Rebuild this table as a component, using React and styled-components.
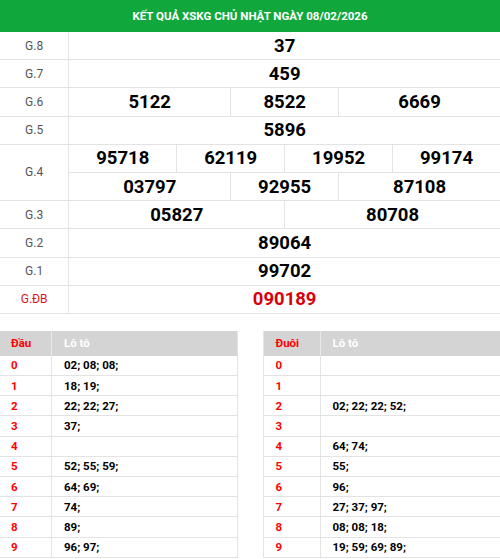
import React from "react";
import styled, { createGlobalStyle } from "styled-components";

const Global = createGlobalStyle`
  html, body { margin: 0; padding: 0; background: #fff; }
  body { font-family: Roboto, "Liberation Sans", Arial, sans-serif; width: 500px; overflow: hidden; }
`;

const Page = styled.div`
  width: 500px;
`;

const Title = styled.div`
  height: 32px;
  background: #10a83c;
  color: #fff;
  font-weight: 700;
  font-size: 11.5px;
  display: flex;
  align-items: center;
  justify-content: center;
  letter-spacing: 0;
`;

const Board = styled.div`
  display: grid;
  grid-template-columns: 68.3px repeat(8, 1fr);
  grid-auto-rows: 28.2px;
`;

const Label = styled.div`
  grid-column: 1;
  grid-row: span ${(p) => p.$rows || 1};
  display: flex;
  align-items: center;
  justify-content: center;
  font-size: 12px;
  color: ${(p) => (p.$special ? "#e0151b" : "#555")};
  border-bottom: 1px solid #e3e3e3;
`;

const Num = styled.div`
  grid-column: span ${(p) => p.$span};
  display: flex;
  align-items: center;
  justify-content: center;
  font-size: 18.5px;
  font-weight: 700;
  color: ${(p) => (p.$special ? "#d9000d" : "#000")};
  border-left: 1px solid #e3e3e3;
  border-bottom: 1px solid #e3e3e3;
`;

const Lower = styled.div`
  display: grid;
  grid-template-columns: 1fr 1fr;
  column-gap: 25px;
  margin-top: 17px;
`;

const LotoTable = styled.div`
  display: grid;
  grid-template-columns: ${(p) => p.$first}px 1fr;
  grid-template-rows: 25px;
  grid-auto-rows: 20.2px;
  border-left: ${(p) => (p.$side === "right" ? "1px solid #e3e3e3" : "none")};
  border-right: ${(p) => (p.$side === "left" ? "1px solid #e3e3e3" : "none")};
`;

const Head = styled.div`
  background: #d4d4d4;
  display: flex;
  align-items: center;
  padding-left: ${(p) => p.$pad}px;
  font-size: 11.5px;
  font-weight: 700;
  color: ${(p) => (p.$red ? "#ff0000" : "#fff")};
  border-left: ${(p) => (p.$divider ? "1px solid #e8e8e8" : "none")};
`;

const Key = styled.div`
  display: flex;
  align-items: center;
  padding-left: ${(p) => p.$pad}px;
  font-size: 11.5px;
  font-weight: 700;
  color: #ff0000;
  border-bottom: 1px solid #e3e3e3;
`;

const Val = styled.div`
  display: flex;
  align-items: center;
  padding-left: 12px;
  font-size: 11.5px;
  font-weight: 700;
  color: #000;
  border-left: 1px solid #e3e3e3;
  border-bottom: 1px solid #e3e3e3;
`;

const prizes = [
  { label: "G.8", rows: [[["37", 8]]] },
  { label: "G.7", rows: [[["459", 8]]] },
  { label: "G.6", rows: [[["5122", 3], ["8522", 2], ["6669", 3]]] },
  { label: "G.5", rows: [[["5896", 8]]] },
  {
    label: "G.4",
    rows: [
      [["95718", 2], ["62119", 2], ["19952", 2], ["99174", 2]],
      [["03797", 3], ["92955", 2], ["87108", 3]],
    ],
  },
  { label: "G.3", rows: [[["05827", 4], ["80708", 4]]] },
  { label: "G.2", rows: [[["89064", 8]]] },
  { label: "G.1", rows: [[["99702", 8]]] },
  { label: "G.ĐB", rows: [[["090189", 8]]], special: true },
];

const dau = [
  "02; 08; 08;",
  "18; 19;",
  "22; 22; 27;",
  "37;",
  "",
  "52; 55; 59;",
  "64; 69;",
  "74;",
  "89;",
  "96; 97;",
];

const duoi = [
  "",
  "",
  "02; 22; 22; 52;",
  "",
  "64; 74;",
  "55;",
  "96;",
  "27; 37; 97;",
  "08; 08; 18;",
  "19; 59; 69; 89;",
];

function Loto({ title, data, side, first, pad }) {
  return (
    <LotoTable $side={side} $first={first}>
      <Head $red $pad={pad}>{title}</Head>
      <Head $divider $pad={12}>Lô tô</Head>
      {data.map((v, i) => (
        <React.Fragment key={i}>
          <Key $pad={pad}>{i}</Key>
          <Val>{v}</Val>
        </React.Fragment>
      ))}
    </LotoTable>
  );
}

export default function App() {
  return (
    <Page>
      <Global />
      <Title>KẾT QUẢ XSKG CHỦ NHẬT NGÀY 08/02/2026</Title>
      <Board>
        {prizes.map((p) => (
          <React.Fragment key={p.label}>
            <Label $rows={p.rows.length} $special={p.special}>
              {p.label}
            </Label>
            {p.rows.flat().map(([n, s], i) => (
              <Num key={i} $span={s} $special={p.special}>
                {n}
              </Num>
            ))}
          </React.Fragment>
        ))}
      </Board>
      <Lower>
        <Loto title="Đầu" data={dau} side="left" first={51} pad={11} />
        <Loto title="Đuôi" data={duoi} side="right" first={56} pad={12} />
      </Lower>
    </Page>
  );
}
